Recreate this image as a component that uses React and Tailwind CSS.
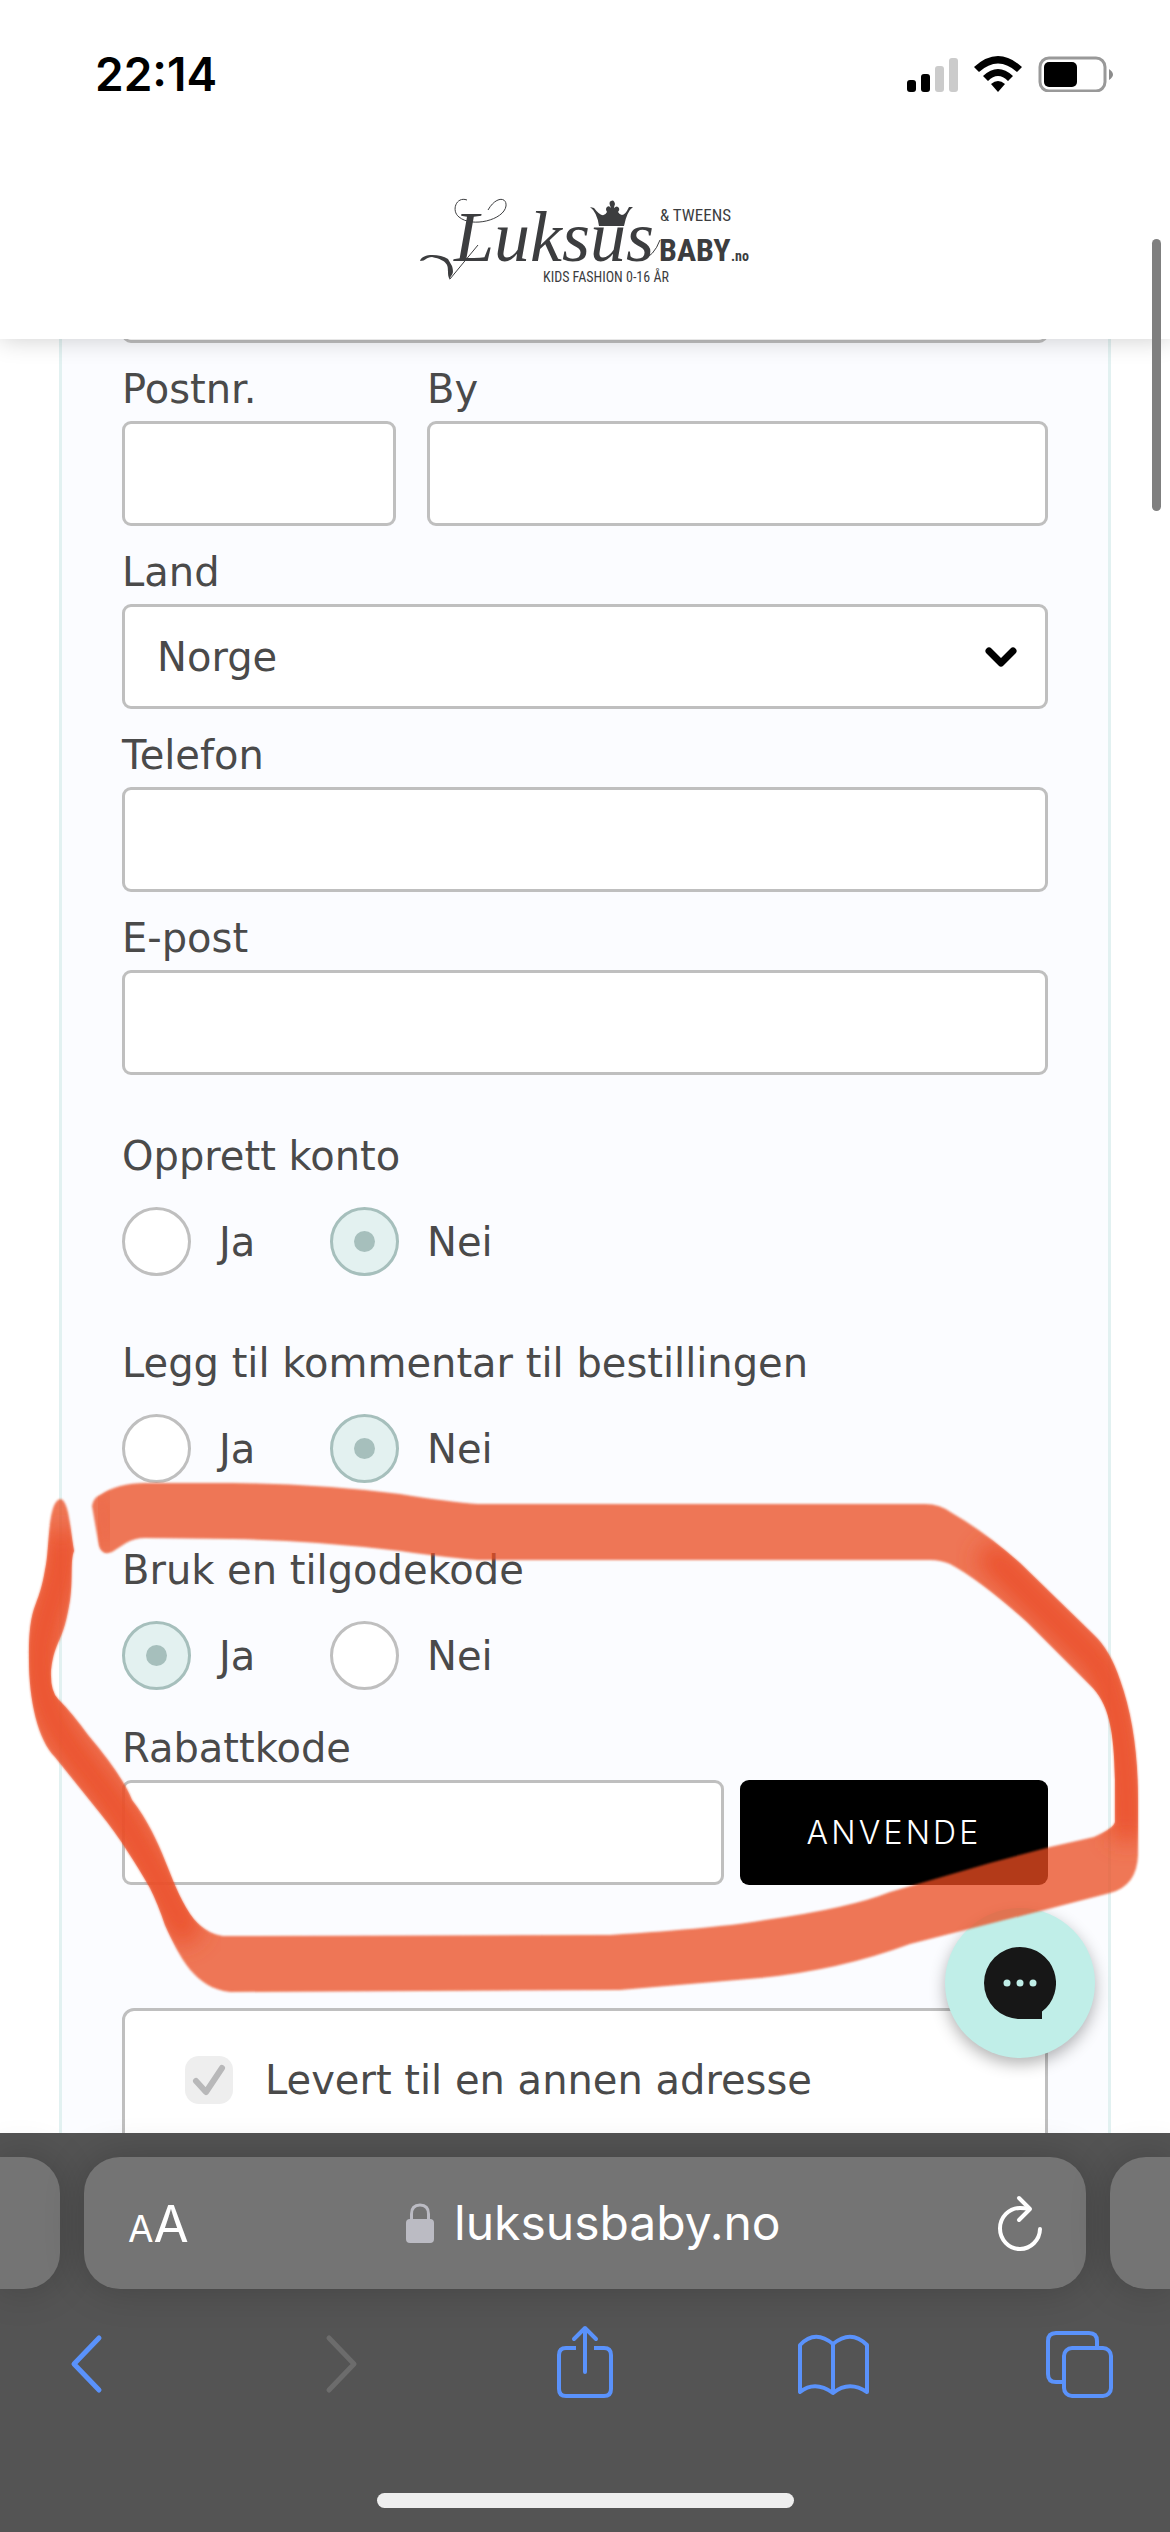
import { useState } from 'react';

const inputClass = 'block w-full h-[105px] px-8 bg-white border-[3px] border-[#bfbfbf] rounded-[9px] outline-none';

const Field = ({ id, label, type = 'text', className = '' }) => (
    <div className={className}>
        <label htmlFor={id} className="block pt-[22px] pb-2 leading-12">{label}</label>
        <input id={id} type={type} className={inputClass} />
    </div>
);

const YesNo = ({ name, label, value, onChange }) => (
    <fieldset className="pt-[51px] pb-3">
        <legend className="float-left w-full leading-12">{label}</legend>
        <div className="flex clear-both pt-[27px]">
            {['Ja', 'Nei'].map((option) => (
                <label key={option} className="flex items-center w-52 gap-7">
                    <input
                        type="radio"
                        name={name}
                        checked={value === option}
                        onChange={() => onChange(option)}
                        className="appearance-none grid place-content-center size-[69px] shrink-0 rounded-full border-[3px] border-[#bfbfbf] bg-white checked:border-[#a6bfbc] checked:bg-[#e3f1f0] before:size-[21px] before:rounded-full checked:before:bg-[#a6bfbc]"
                    />
                    {option}
                </label>
            ))}
        </div>
    </fieldset>
);

const StatusBar = () => (
    <div className="flex items-center justify-between h-[148px] pl-[95px] pr-[57px] text-black">
        <time className="text-[46px] leading-none font-semibold">22:14</time>
        <svg viewBox="0 0 207 36" className="w-[207px] h-9">
            <rect x="1" y="24" width="9" height="12" rx="3" />
            <rect x="15" y="18" width="9" height="18" rx="3" />
            <rect x="29" y="10" width="9" height="26" rx="3" fill="#cbcbcb" />
            <rect x="43" y="2" width="9" height="34" rx="3" fill="#cbcbcb" />
            <path d="M68 11 Q92 -11 116 11 L111 16 Q92 -1 73 16Z" />
            <path d="M77 20 Q92 6 107 20 L102 25 Q92 15 82 25Z" />
            <path d="M85 28 Q92 22 99 28 L92 36Z" />
            <rect x="134" y="2" width="65" height="33" rx="9" fill="none" stroke="#999" strokeWidth="3" />
            <rect x="138" y="6" width="33" height="25" rx="5" />
            <path d="M203 13 Q211 18.500 203 24Z" fill="#8c8c8c" />
        </svg>
    </div>
);

const Logo = () => (
    <a href="#top" aria-label="Luksusbaby.no" className="block">
        <svg viewBox="0 0 330 90" className="w-[330px] h-[90px] font-['Roboto_Condensed','Liberation_Sans_Narrow',sans-serif]" fill="#3c3d3f">
            <path d="M47 4 C36 0 31 15 39 21 C52 32 84 24 86 10 C87 1 76 0 68 14" fill="none" stroke="#3c3d3f" strokeWidth="1" />
            <path d="M0 65 C2 57 20 58 28 63 L32 70 C35 80 30 78 30 84 C24 76 36 66 12 61 C6 61 6 65 0 65Z" />
            <path d="M30 83 L58 49 M222 64 Q234 60 240 44" fill="none" stroke="#3c3d3f" strokeWidth="1" />
            <text x="34" y="65" className="text-[72px] italic font-['Liberation_Serif',serif]">Luksus</text>
            <path d="M170 11 L174 12 Q183 24 187 16 Q185 13 187 11 Q189 9 191 12 Q188 6 191 5 Q194 3 195 8 Q194 11 194 12 Q197 9 199 12 Q200 14 198 16 Q203 24 209 11 L213 11 Q207 15 204 30 L179 30 Q177 16 170 11Z" />
            <text x="240" y="25" className="text-[17px]">&amp; TWEENS</text>
            <text x="239" y="65" className="text-[32px] font-bold">BABY</text>
            <text x="311" y="65" className="text-[14px] font-bold">.no</text>
            <text x="123" y="86" className="text-[14px]">KIDS FASHION 0-16 ÅR</text>
        </svg>
    </a>
);

// Brush stroke drawn around the discount code section
const band = 'M92 1506 Q93 1498 100 1495 Q118 1483 145 1483 L232 1483 Q320 1484 400 1494 Q450 1502 478 1504 L925 1504 Q940 1504 952 1513 Q985 1532 1020 1563 L1094 1635 Q1110 1650 1120 1680 Q1138 1730 1138 1800 L1138 1855 Q1137 1886 1110 1893 L1052 1908 L910 1944 Q840 1970 760 1978 Q690 1984 620 1990 L230 1992 C195 1988 180 1958 165 1925 Q158 1904 150 1888 C135 1862 120 1838 100 1813 L55 1757 C38 1740 29 1700 29 1660 C29 1600 38 1612 45 1570 C50 1550 47 1500 61 1499 C69 1502 70 1528 74 1551 C70 1560 73 1580 70 1600 C63 1645 55 1638 51 1670 Q50 1691 58 1699 Q72 1713 88 1735 Q122 1775 132 1800 C164 1842 168 1880 190 1914 Q203 1933 223 1936 L610 1935 Q720 1928 765 1920 Q850 1908 890 1892 L990 1863 L1050 1847 L1094 1837 Q1114 1828 1115 1822 L1115 1780 C1114 1730 1109 1703 1090 1685 L1027 1622 Q980 1580 950 1564 Q940 1560 930 1560 L478 1560 Q450 1558 400 1551 Q310 1540 232 1539 L145 1538 Q135 1538 126 1543 L112 1552 Q102 1556 99 1546Z';

const Annotation = () => (
    <svg viewBox="0 0 1170 2532" preserveAspectRatio="none" className="absolute inset-0 size-full pointer-events-none" aria-hidden="true">
        <defs>
            <clipPath id="band"><path d={band} /></clipPath>
            <filter id="soft" x="-20%" y="-20%" width="140%" height="140%"><feGaussianBlur stdDeviation="12" /></filter>
            <filter id="edge"><feGaussianBlur stdDeviation="1" /></filter>
        </defs>
        <path d={band} fill="#eb4d20" opacity="0.76" filter="url(#edge)" />
        <g clipPath="url(#band)" fill="none" stroke="#eb4f2a" strokeWidth="30">
            <path d="M60 1530 C70 1590 36 1610 40 1670 C44 1740 100 1770 136 1840 Q160 1880 190 1940" filter="url(#soft)" />
            <path d="M985 1550 L1100 1665 Q1127 1720 1127 1840" filter="url(#soft)" />
            <path d="M100 1490 L108 1550" strokeWidth="14" opacity="0.5" filter="url(#soft)" />
        </g>
    </svg>
);

const BrowserBar = () => (
    <footer className="shrink-0 pt-6 bg-[#545454] text-white">
        <div className="flex gap-6 h-[132px]">
            <div className="w-[60px] rounded-r-[36px] bg-[#747474] shadow-[0_0_40px_rgba(0,0,0,0.2)]" />
            <div className="flex flex-1 items-center px-11 rounded-[36px] bg-[#747474] shadow-[0_0_40px_rgba(0,0,0,0.2)]">
                <button type="button" aria-label="Tekststørrelse" className="flex items-baseline leading-none">
                    <span className="text-[37px]">A</span>
                    <span className="text-[51px]">A</span>
                </button>
                <a href="#address" className="flex flex-1 items-center justify-center gap-5 text-[48px] leading-none">
                    <svg viewBox="0 0 28 40" className="w-7 h-10" fill="#bbbbc3">
                        <path d="M5.500 18 V11 Q5.500 2 14 2 Q22.500 2 22.500 11 V18" fill="none" stroke="#bbbbc3" strokeWidth="3" />
                        <rect x="0" y="16" width="28" height="24" rx="4" />
                    </svg>
                    luksusbaby.no
                </a>
                <button type="button" aria-label="Last på nytt">
                    <svg viewBox="0 0 44 56" className="w-11 h-14" fill="none" stroke="white" strokeWidth="4" strokeLinecap="round" strokeLinejoin="round">
                        <path d="M42 34 A20 20.500 0 1 1 22 13 Q27 13 31 14" />
                        <path d="M21 3 L32 14 L21 25" />
                    </svg>
                </button>
            </div>
            <div className="w-[60px] rounded-l-[36px] bg-[#747474] shadow-[0_0_40px_rgba(0,0,0,0.2)]" />
        </div>
        <nav className="flex items-center justify-between h-[150px] px-[46px] text-[#5a92fb]">
            <button type="button" aria-label="Tilbake">
                <svg viewBox="0 0 80 80" className="size-20" fill="none" stroke="currentColor" strokeWidth="5" strokeLinecap="round" strokeLinejoin="round">
                    <path d="M53 14 L28 40 L53 66" />
                </svg>
            </button>
            <button type="button" aria-label="Frem" disabled>
                <svg viewBox="0 0 80 80" className="size-20" fill="none" stroke="#6c6c6c" strokeWidth="5" strokeLinecap="round" strokeLinejoin="round">
                    <path d="M33 14 L58 40 L33 66" />
                </svg>
            </button>
            <button type="button" aria-label="Del">
                <svg viewBox="0 0 80 80" className="size-20" fill="none" stroke="currentColor" strokeWidth="4" strokeLinecap="round" strokeLinejoin="round">
                    <path d="M31 24 H21 Q14 24 14 31 V65 Q14 72 21 72 H59 Q66 72 66 65 V31 Q66 24 59 24 H49" strokeLinecap="butt" />
                    <path d="M40 48 V4 M29 15 L40 4 L51 15" />
                </svg>
            </button>
            <button type="button" aria-label="Bokmerker">
                <svg viewBox="0 0 80 80" className="size-20" fill="none" stroke="currentColor" strokeWidth="4" strokeLinecap="round" strokeLinejoin="round">
                    <path d="M5 68 V21 Q20 5 38 20 Q56 5 72 21 V68 Q54 56 38 69 Q20 56 5 68Z M38 20 V69" />
                </svg>
            </button>
            <button type="button" aria-label="Faner">
                <svg viewBox="0 0 80 80" className="size-20" fill="none" stroke="currentColor" strokeWidth="4" strokeLinejoin="round">
                    <path d="M18 58 H12 Q4 58 4 50 V17 Q4 9 12 9 H45 Q53 9 53 17 V23" />
                    <rect x="20" y="24" width="47" height="48" rx="8" />
                </svg>
            </button>
        </nav>
        <div className="pt-[54px] pb-6">
            <div className="w-[417px] h-[15px] mx-auto rounded-full bg-[#eeeeee]" />
        </div>
    </footer>
);

const App = () => {
    const [account, setAccount] = useState('Nei');
    const [comment, setComment] = useState('Nei');
    const [voucher, setVoucher] = useState('Ja');

    return (
        <div id="top" className="relative flex flex-col h-screen overflow-hidden bg-white text-[#4a4a4a] font-['Inter','Liberation_Sans',sans-serif]">
            <header className="relative shrink-0 bg-white shadow-[0_0_24px_rgba(0,0,0,0.2)]">
                <StatusBar />
                <div className="flex justify-center pt-12 pb-[53px]">
                    <Logo />
                </div>
            </header>

            <main className="flex-1 min-h-0 overflow-hidden px-[59px]">
                <form className="min-h-full px-[60px] border-x-[3px] border-[#e2f1f1] bg-[#fbfcff] text-[40px] font-['DejaVu_Sans',sans-serif]" onSubmit={(e) => e.preventDefault()}>
                    {/* scrolled so that only the lower edge of the address box shows */}
                    <div className="overflow-hidden">
                        <input aria-label="Adresse" className={`${inputClass} -mt-[101px]`} />
                    </div>
                    <div className="flex gap-[31px]">
                        <Field id="zip" label="Postnr." className="w-[274px]" />
                        <Field id="city" label="By" className="flex-1" />
                    </div>
                    <div>
                        <label htmlFor="country" className="block pt-[22px] pb-2 leading-12">Land</label>
                        <div className="relative">
                            <select id="country" defaultValue="Norge" className={`${inputClass} appearance-none`}>
                                <option>Norge</option>
                            </select>
                            <svg viewBox="0 0 32 22" className="absolute right-[31px] top-[42px] w-8 h-[22px] pointer-events-none" fill="none" stroke="black" strokeWidth="7" strokeLinecap="round" strokeLinejoin="round">
                                <path d="M4 5 L16 17 L28 5" />
                            </svg>
                        </div>
                    </div>
                    <Field id="phone" label="Telefon" type="tel" />
                    <Field id="email" label="E-post" type="email" className="mb-[6px]" />

                    <YesNo name="account" label="Opprett konto" value={account} onChange={setAccount} />
                    <YesNo name="comment" label="Legg til kommentar til bestillingen" value={comment} onChange={setComment} />
                    <YesNo name="voucher" label="Bruk en tilgodekode" value={voucher} onChange={setVoucher} />

                    <div className="flex items-end gap-4">
                        <Field id="code" label="Rabattkode" className="flex-1" />
                        <button type="button" className="w-[308px] h-[105px] rounded-[9px] bg-black text-white text-[32px] font-light font-['Inter',sans-serif] tracking-widest">
                            ANVENDE
                        </button>
                    </div>

                    <div className="mt-[123px] px-15 py-[45px] h-60 border-[3px] border-[#bfbfbf] rounded-xl bg-white">
                        <label className="flex items-center gap-8 leading-12">
                            <span className="relative size-12">
                                <input type="checkbox" defaultChecked className="peer block appearance-none size-12 rounded-[14px] bg-[#eeeeee]" />
                                <svg viewBox="0 0 48 48" className="absolute inset-0 hidden peer-checked:block pointer-events-none" fill="none" stroke="#b8b8b9" strokeWidth="6" strokeLinecap="round" strokeLinejoin="round">
                                    <path d="M11 25 L21 36 L37 12" />
                                </svg>
                            </span>
                            Levert til en annen adresse
                        </label>
                    </div>
                </form>
            </main>

            <button type="button" aria-label="Chat" className="absolute right-[75px] bottom-[474px] flex items-center justify-center size-[150px] rounded-full bg-[#c0eee8] shadow-[0_6px_16px_rgba(0,0,0,0.3)]">
                <svg viewBox="0 0 72 72" className="size-[72px]">
                    <path d="M36 0 A36 36 0 0 1 58 64.500 V72 H36 A36 36 0 0 1 36 0Z" fill="#171717" />
                    <g fill="#c0eee8">
                        <circle cx="23" cy="36" r="3.500" />
                        <circle cx="36" cy="36" r="3.500" />
                        <circle cx="49" cy="36" r="3.500" />
                    </g>
                </svg>
            </button>
            <div className="absolute right-[9px] top-[239px] w-[9px] h-[272px] rounded-full bg-[#7f7f7f]" />
            <Annotation />
            <BrowserBar />
        </div>
    );
};
export default App;
